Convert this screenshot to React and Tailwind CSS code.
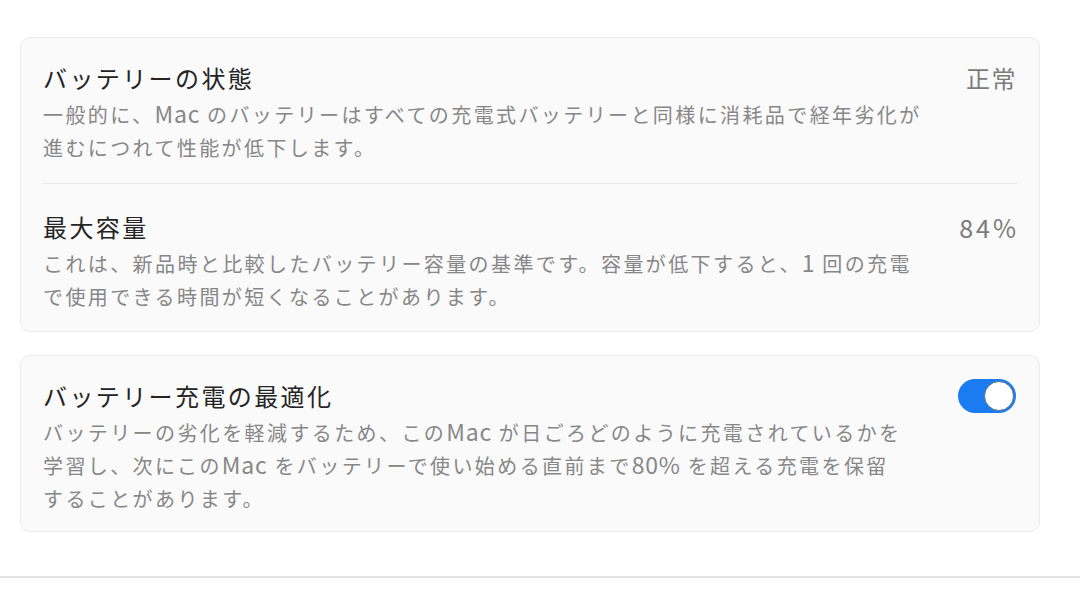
const FONT = "font-['Noto_Sans_CJK_JP','Noto_Sans',sans-serif]"

// latin runs in the reference are wider and untracked
const L = ({ children }) => <span className="text-[23px] leading-none tracking-[0.8px]">{children}</span>

const Row = ({ title, lines, right, divider, top = 'pt-[24px]', bottom = 'pb-[19px]' }) => (
  <div className={`flex items-start justify-between ${top} ${bottom} ${divider ? 'border-b border-[#e9e9e9]' : ''}`}>
    <div>
      <div className="text-[24px] leading-[32px] tracking-[2.4px] text-[#242424]">{title}</div>
      <div className="mt-[4px] text-[20px] leading-[33px] tracking-[2.4px] text-[#878787]">
        {lines.map((l, i) => (
          <div key={i} className="h-[33px] whitespace-nowrap">{l}</div>
        ))}
      </div>
    </div>
    {right}
  </div>
)

const Value = ({ children, latin }) => (
  <div
    className={`leading-[32px] text-[#7b7b7b] ${latin ? 'text-[25px] tracking-[3px] mr-[-2px]' : 'text-[24px] tracking-[1.5px]'}`}
  >
    {children}
  </div>
)

const Toggle = () => (
  <div className="mt-[-1px] mr-[1px] flex h-[34px] w-[58px] items-center justify-end rounded-full bg-[#1b7cf1] p-[2px]">
    <div className="h-[30px] w-[30px] rounded-full border border-[#5a6f8a] bg-white" />
  </div>
)

export default function App() {
  return (
    <div className={`${FONT} min-h-[595px] w-[1080px] bg-white`}>
      <div className="px-[20px] pt-[37px] pr-[40px]">
        <div className="rounded-[10px] border border-[#ebebeb] bg-[#fafafa] px-[22px]">
          <Row
            divider
            title="バッテリーの状態"
            lines={[
              <>一般的に、<L>Mac</L> のバッテリーはすべての充電式バッテリーと同様に消耗品で経年劣化が</>,
              '進むにつれて性能が低下します。',
            ]}
            right={<Value>正常</Value>}
          />
          <Row
            top="pt-[27px]"
            bottom="pb-[18px]"
            title="最大容量"
            lines={[
              <>これは、新品時と比較したバッテリー容量の基準です。容量が低下すると、<L>1</L> 回の充電</>,
              'で使用できる時間が短くなることがあります。',
            ]}
            right={<Value latin>84%</Value>}
          />
        </div>

        <div className="mt-[23px] rounded-[10px] border border-[#ebebeb] bg-[#fafafa] px-[22px]">
          <Row
            bottom="pb-[16px]"
            title="バッテリー充電の最適化"
            lines={[
              <>バッテリーの劣化を軽減するため、この<L>Mac</L> が日ごろどのように充電されているかを</>,
              <>学習し、次にこの<L>Mac</L> をバッテリーで使い始める直前まで<L>80%</L> を超える充電を保留</>,
              'することがあります。',
            ]}
            right={<Toggle />}
          />
        </div>
      </div>
      <div className="mt-[44px] h-[2px] w-full bg-[#e4e4e4]" />
    </div>
  )
}
